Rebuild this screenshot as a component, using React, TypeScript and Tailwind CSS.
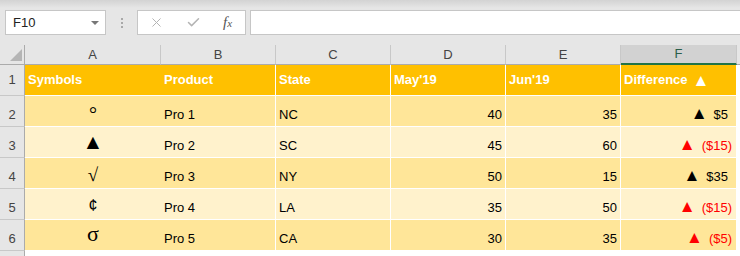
import { Check, X } from 'lucide-react'

type Row = {
  n: number
  sym: string
  symClass: string
  product: string
  state: string
  may: number
  jun: number
  diff: string
  neg: boolean
}

const rows: Row[] = [
  { n: 2, sym: '°', symClass: "text-[20px] pb-[0px] font-['Liberation_Serif',serif]", product: 'Pro 1', state: 'NC', may: 40, jun: 35, diff: '$5', neg: false },
  { n: 3, sym: '▲', symClass: "text-[21px] pb-[3px] font-['Liberation_Sans',sans-serif]", product: 'Pro 2', state: 'SC', may: 45, jun: 60, diff: '($15)', neg: true },
  { n: 4, sym: '√', symClass: "text-[19px] pb-[2px] font-['Liberation_Serif',serif]", product: 'Pro 3', state: 'NY', may: 50, jun: 15, diff: '$35', neg: false },
  { n: 5, sym: '¢', symClass: "text-[16px] pb-[3px] font-['Liberation_Sans',sans-serif]", product: 'Pro 4', state: 'LA', may: 35, jun: 50, diff: '($15)', neg: true },
  { n: 6, sym: 'σ', symClass: "text-[22px] pb-[3px] font-['Liberation_Serif',serif]", product: 'Pro 5', state: 'CA', may: 30, jun: 35, diff: '($5)', neg: true }
]

const colLetters = ['A', 'B', 'C', 'D', 'E']

function FormulaBar() {
  return (
    <div className="flex items-start h-[37px] pt-[2px] pl-[5px]">
      <div className="w-[101px] h-[25px] bg-white border border-[#c6c6c6] flex items-center justify-between pl-[7px] pr-[6px] text-[13px] text-[#222]">
        <span>F10</span>
        <span className="w-0 h-0 border-l-[4px] border-r-[4px] border-t-[4px] border-l-transparent border-r-transparent border-t-[#777]" />
      </div>
      <div className="w-[31px] h-[25px] flex flex-col items-center justify-center gap-[2px]">
        <span className="w-[2px] h-[2px] bg-[#a8a8a8]" />
        <span className="w-[2px] h-[2px] bg-[#a8a8a8]" />
        <span className="w-[2px] h-[2px] bg-[#a8a8a8]" />
      </div>
      <div className="w-[109px] h-[25px] bg-white border border-[#c6c6c6] flex items-center pl-[11px] gap-[22px]">
        <X size={15} strokeWidth={1.6} className="text-[#b4b4b4]" />
        <Check size={15} strokeWidth={2.4} className="text-[#b4b4b4]" />
        <span className="font-['Liberation_Serif',serif] italic text-[#555] text-[15px] leading-none">
          f<span className="text-[11px]">x</span>
        </span>
      </div>
      <div className="flex-1 ml-[4px] mr-[-4px] h-[25px] bg-white border border-[#c6c6c6]" />
    </div>
  )
}

export default function App() {
  const cell = 'h-[31px] border-b border-white flex items-end pb-[2px] px-[3px] text-[13px]'
  return (
    <div className="w-[740px] h-[256px] overflow-hidden bg-[#e6e6e6] font-['Liberation_Sans',Arial,sans-serif]">
      <div className="h-[8px] bg-gradient-to-b from-[#d3d3d3] to-[#e6e6e6]" />
      <FormulaBar />
      <div className="grid grid-cols-[25px_136px_115px_115px_115px_115px_116px_1fr]">
        {/* column headers */}
        <div className="h-[20px] border-r border-b border-[#ababab] relative">
          <svg className="absolute left-[10px] top-[4px]" width="12" height="12" viewBox="0 0 12 12">
            <polygon points="12,0 12,12 0,12" fill="#b5b5b5" />
          </svg>
        </div>
        {colLetters.map((l) => (
          <div
            key={l}
            className="h-[20px] border-r border-r-[#c8c8c8] border-b border-b-[#ababab] flex items-center justify-center text-[13px] text-[#444]"
          >
            {l}
          </div>
        ))}
        <div className="h-[20px] bg-[#d2d2d2] border-r border-r-[#c8c8c8] border-b-2 border-b-[#217346] flex items-center justify-center text-[13px] text-[#2b5e4a]">
          F
        </div>
        <div className="h-[20px] border-b border-[#ababab]" />

        {/* row 1 */}
        <div className="h-[31px] border-r border-r-[#ababab] border-b border-b-[#c8c8c8] flex items-center justify-center text-[13px] text-[#444]">
          1
        </div>
        <div className="h-[31px] bg-[#ffc000] border-b border-white flex items-center px-[3px] text-[13px] font-bold text-white">Symbols</div>
        <div className="h-[31px] bg-[#ffc000] border-b border-r border-white flex items-center px-[3px] text-[13px] font-bold text-white">Product</div>
        <div className="h-[31px] bg-[#ffc000] border-b border-r border-white flex items-center px-[3px] text-[13px] font-bold text-white">State</div>
        <div className="h-[31px] bg-[#ffc000] border-b border-r border-white flex items-center px-[3px] text-[13px] font-bold text-white">May'19</div>
        <div className="h-[31px] bg-[#ffc000] border-b border-r border-white flex items-center px-[3px] text-[13px] font-bold text-white">Jun'19</div>
        <div className="h-[31px] bg-[#ffc000] border-b border-r border-white flex items-center gap-[5px] px-[3px] text-[13px] font-bold text-white">
          <span>Difference</span>
          <span className="text-[17px] leading-none pt-[1px]">▲</span>
        </div>
        <div className="h-[31px] bg-white" />

        {rows.map((r) => {
          const bg = r.n % 2 === 0 ? 'bg-[#ffe699]' : 'bg-[#fff2cc]'
          return [
            <div
              key={`h${r.n}`}
              className="h-[31px] border-r border-r-[#ababab] border-b border-b-[#c8c8c8] flex items-end justify-center pb-[2px] text-[13px] text-[#444]"
            >
              {r.n}
            </div>,
            <div key={`a${r.n}`} className={`${cell} ${bg} justify-center text-black`}>
              <span className={`leading-none ${r.symClass}`}>{r.sym}</span>
            </div>,
            <div key={`b${r.n}`} className={`${cell} ${bg} border-r text-black`}>{r.product}</div>,
            <div key={`c${r.n}`} className={`${cell} ${bg} border-r text-black`}>{r.state}</div>,
            <div key={`d${r.n}`} className={`${cell} ${bg} border-r justify-end text-black`}>{r.may}</div>,
            <div key={`e${r.n}`} className={`${cell} ${bg} border-r justify-end text-black`}>{r.jun}</div>,
            <div
              key={`f${r.n}`}
              className={`${cell} ${bg} border-r justify-end gap-[6px] ${r.neg ? 'pr-[4px] text-[#ff0000]' : 'pr-[8px] text-black'}`}
            >
              <span className="text-[17px] leading-none pb-[2px]">▲</span>
              <span>{r.diff}</span>
            </div>,
            <div key={`g${r.n}`} className="h-[31px] bg-white" />
          ]
        })}

        {/* row 7 (cut off) */}
        <div className="h-[20px] border-r border-[#ababab]" />
        <div className="h-[20px] bg-white col-span-7" />
      </div>
    </div>
  )
}
